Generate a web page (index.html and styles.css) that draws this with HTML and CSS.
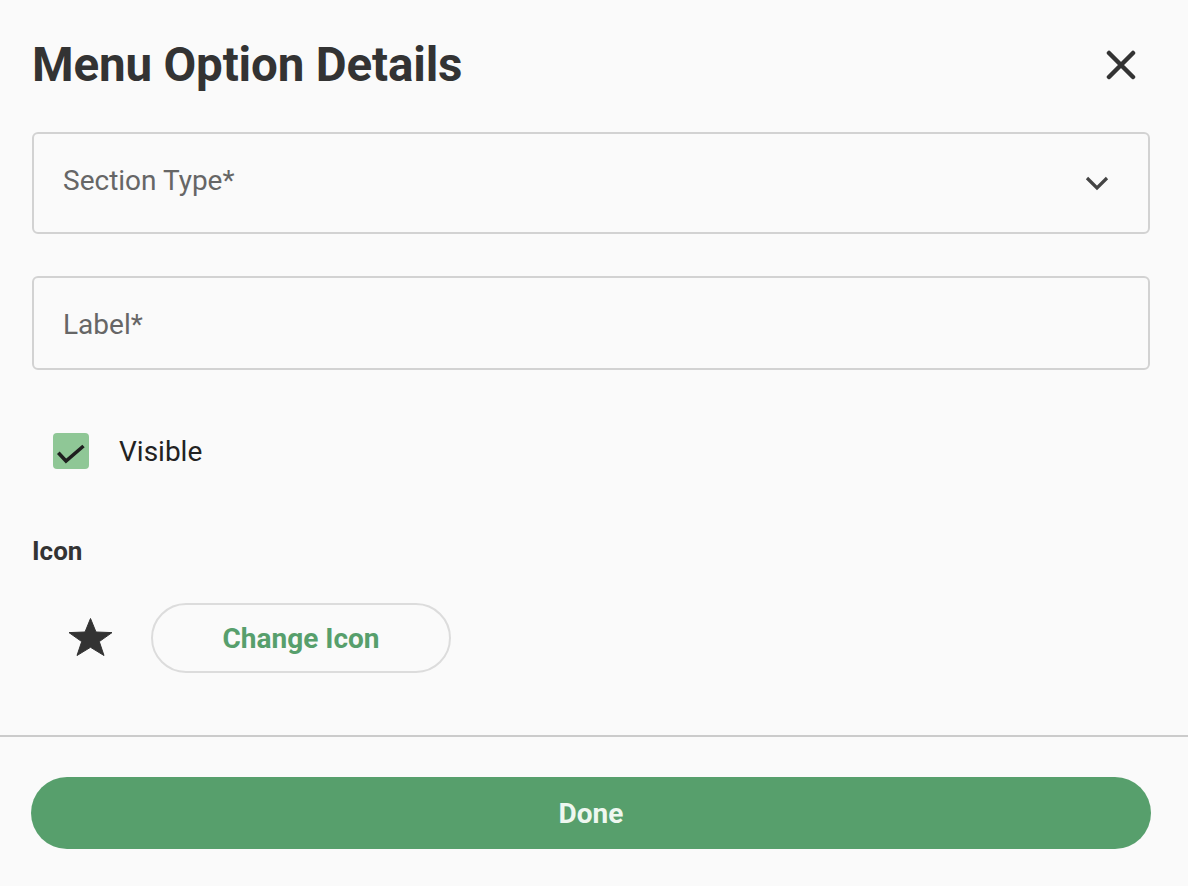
FILE: index.html
```html
<!DOCTYPE html>
<html>
<head>
<meta charset="utf-8">
<link rel="stylesheet" href="styles.css">
</head>
<body>
<div class="dialog">
  <header class="header">
    <h1 class="title">Menu Option Details</h1>
    <button class="close" aria-label="Close">
      <svg width="30" height="30" viewBox="0 0 30 30"><path d="M3 3L27 27M27 3L3 27" stroke="#333" stroke-width="4.5" stroke-linecap="round" fill="none"/></svg>
    </button>
  </header>
  <main class="content">
    <div class="field field-select">
      <span class="placeholder placeholder-select">Section Type*</span>
      <svg class="chevron" width="24" height="16" viewBox="0 0 24 16"><path d="M2 3L12 13L22 3" stroke="#444" stroke-width="3.2" fill="none"/></svg>
    </div>
    <div class="field field-text">
      <span class="placeholder placeholder-text">Label*</span>
    </div>
    <label class="check-row">
      <span class="checkbox">
        <svg width="36" height="36" viewBox="0 0 36 36"><path d="M5.3 19.7L13 28L30.5 13" stroke="#1f1f1f" stroke-width="3.6" fill="none"/></svg>
      </span>
      <span class="check-label">Visible</span>
    </label>
    <div class="section-label">Icon</div>
    <div class="icon-row">
      <svg class="star" width="43" height="38" viewBox="0 0 43 38"><polygon points="21.5,0.5 27,14 43,14.6 30.3,23.6 35,37.5 21.5,29.3 8,37.5 12.7,23.6 0,14.6 16,14" fill="#333" stroke="#333" stroke-width="1" stroke-linejoin="round"/></svg>
      <button class="outline-btn">Change Icon</button>
    </div>
  </main>
  <footer class="footer">
    <button class="primary-btn">Done</button>
  </footer>
</div>
</body>
</html>
```

FILE: styles.css
```css
* { box-sizing: border-box; }
html, body { margin: 0; padding: 0; }
body {
  background: #fafafa;
  font-family: Roboto, "Liberation Sans", sans-serif;
  color: #222;
}
.dialog {
  width: 1188px;
  height: 886px;
  display: flex;
  flex-direction: column;
}
.header {
  height: 132px;
  display: flex;
  align-items: center;
  justify-content: space-between;
  padding: 0 52px 0 32px;
}
.title {
  margin: 0;
  font-size: 47.5px;
  font-weight: 700;
  color: #333;
  line-height: 1;
  letter-spacing: -0.15px;
}
.close {
  background: none;
  border: 0;
  padding: 0;
  width: 30px;
  height: 30px;
  margin-top: -2px;
  display: flex;
}
.content {
  padding: 0 38px 0 32px;
  flex: 1;
}
.field {
  border: 2px solid #d2d2d2;
  border-radius: 6px;
  display: flex;
  align-items: center;
  padding: 0 0 0 29px;
}
.field-select { height: 102px; justify-content: space-between; padding-right: 39px; }
.field-text { height: 94px; margin-top: 42px; }
.placeholder {
  font-size: 28px;
  color: #666;
}
.placeholder-select { margin-top: -6px; }
.placeholder-text { margin-top: 2px; }
.check-row {
  display: flex;
  align-items: center;
  height: 36px;
  margin-top: 63px;
  padding-left: 21px;
}
.checkbox {
  width: 36px;
  height: 36px;
  border-radius: 4px;
  background: #8fc796;
  display: flex;
}
.check-label {
  font-size: 28px;
  color: #222;
  margin-left: 30px;
}
.section-label {
  margin-top: 66px;
  font-size: 26px;
  font-weight: 700;
  line-height: 32px;
  color: #333;
}
.icon-row {
  display: flex;
  align-items: center;
  margin-top: 36px;
  padding-left: 37px;
}
.star { margin-top: -3px; }
.outline-btn {
  margin-left: 39px;
  width: 300px;
  height: 70px;
  border: 2px solid #dcdcdc;
  border-radius: 35px;
  background: transparent;
  font-family: Roboto, "Liberation Sans", sans-serif;
  font-size: 28px;
  font-weight: 700;
  color: #579f6c;
}
.footer {
  border-top: 2px solid #cbcbcb;
  padding: 40px 37px 37px 31px;
}
.primary-btn {
  display: block;
  width: 100%;
  height: 72px;
  border: 0;
  border-radius: 36px;
  background: #579f6c;
  color: #eef7f0;
  font-family: Roboto, "Liberation Sans", sans-serif;
  font-size: 28px;
  font-weight: 700;
}
```
